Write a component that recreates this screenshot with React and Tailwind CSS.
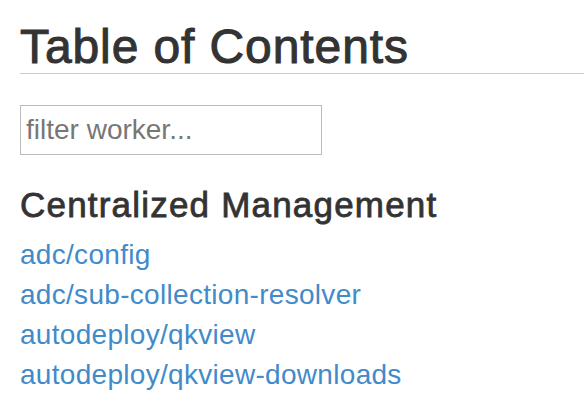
export default function App() {
  const links = [
    "adc/config",
    "adc/sub-collection-resolver",
    "autodeploy/qkview",
    "autodeploy/qkview-downloads",
  ];
  return (
    <div className="min-h-[400px] bg-white pl-[20px] font-['Liberation_Sans',Arial,sans-serif] text-[#333] overflow-hidden">
      <h1 className="mt-[21px] text-[48px] leading-[52px] border-b border-[#ccc] tracking-[0.9px] [-webkit-text-stroke:1px_#333]">
        Table of Contents
      </h1>
      <input
        type="text"
        placeholder="filter worker..."
        className="mt-[31px] block w-[302px] h-[50px] border border-[#bbb] px-[5px] text-[28px] text-[#555] placeholder:text-[#777] outline-none"
      />
      <h2 className="mt-[30px] text-[35px] leading-[40px] tracking-[1.2px] [-webkit-text-stroke:0.8px_#333]">
        Centralized Management
      </h2>
      <ul className="mt-[10px]">
        {links.map((l) => (
          <li key={l} className="text-[28px] leading-[40px]">
            <a href="#" className="text-[#428bca] tracking-[0.3px]">
              {l}
            </a>
          </li>
        ))}
      </ul>
    </div>
  );
}
